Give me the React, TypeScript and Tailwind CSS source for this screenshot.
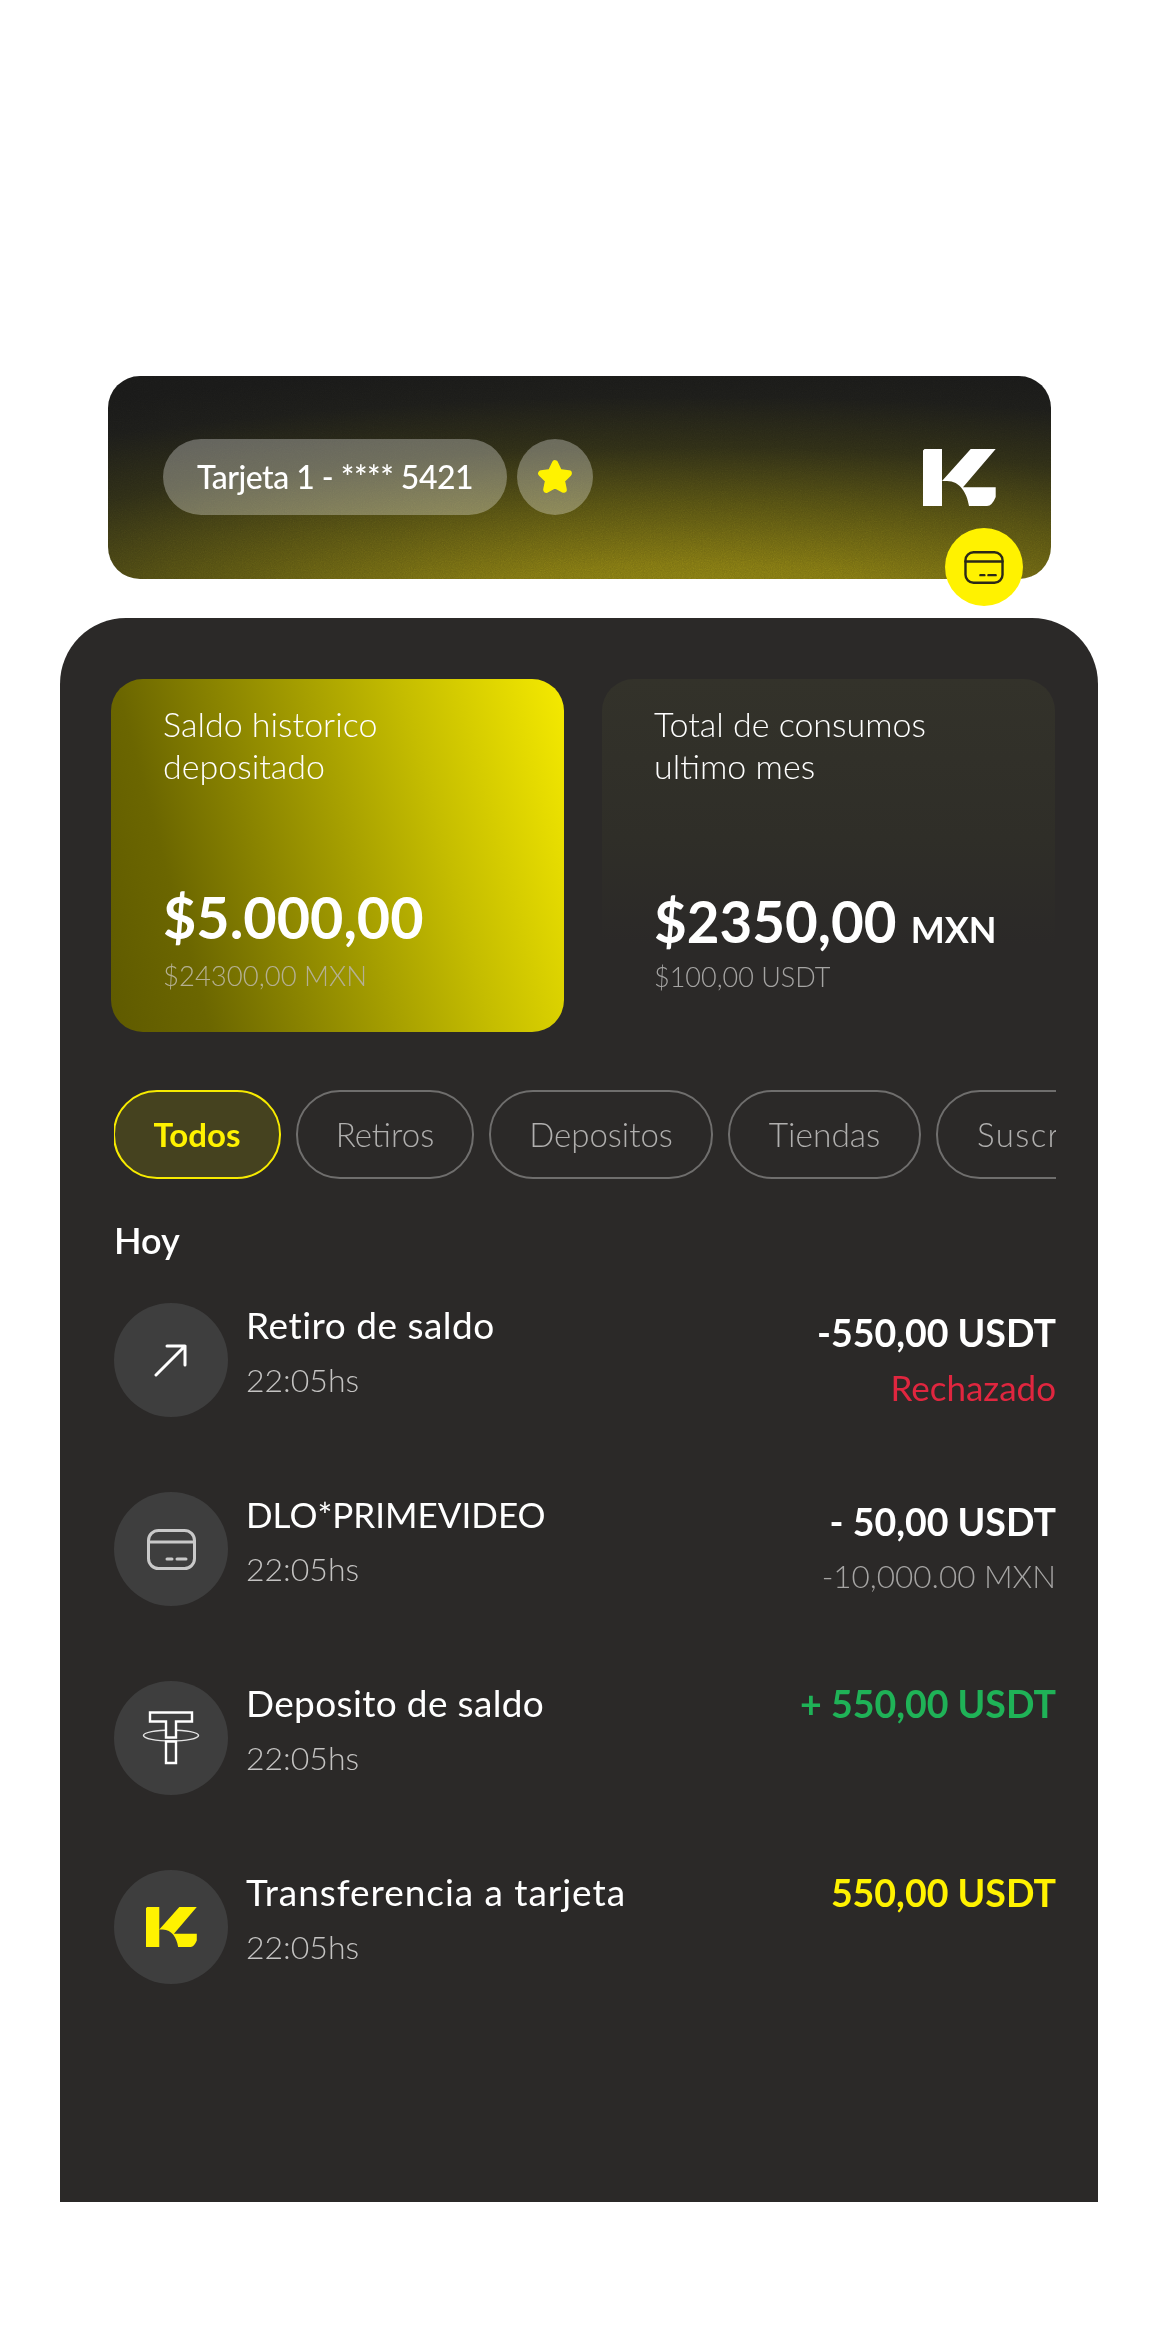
import React from "react";

function KLogo({ className, fill }: { className: string; fill: string }) {
  return (
    <svg viewBox="0 0 73 57" className={className}>
      <path fill={fill} d="M1.5 0H19V32L47.7 0H72.7L40 38.3H72.7V48Q69 57 64 57H46C44 44 37 32 24 32H19V57H0V1.5Z" />
    </svg>
  );
}

function CardIcon({ className, stroke }: { className: string; stroke: string }) {
  return (
    <svg viewBox="0 0 49 41" className={className} fill="none" stroke={stroke} strokeWidth="3" strokeLinecap="round">
      <rect x="1.5" y="1.5" width="46" height="38" rx="10" />
      <path d="M1.5 13H47.5" />
      <path d="M20 30H25M30 30H39" />
    </svg>
  );
}

function TetherIcon() {
  return (
    <svg viewBox="0 0 58 54" className="w-[58px] h-[54px]" fill="none" stroke="#ffffff">
      <ellipse cx="29" cy="24.5" rx="27.5" ry="5.5" strokeWidth="1.5" stroke="#e4e4e4" />
      <path d="M8 1.5H50V10.5H34V26.5H24V10.5H8Z" fill="#3e3e3e" strokeWidth="2.4" />
      <path d="M24 30.5V52H34V30.5Z" fill="#3e3e3e" strokeWidth="2.4" />
    </svg>
  );
}

function ArrowIcon() {
  return (
    <svg viewBox="0 0 34 34" className="w-[34px] h-[34px]" fill="none" stroke="#ffffff" strokeWidth="3" strokeLinecap="round" strokeLinejoin="round">
      <path d="M2 32L31 3M13 3H31V22" />
    </svg>
  );
}

const rows = [
  { icon: <ArrowIcon />, title: "Retiro de saldo", titleClass: "text-[37px] tracking-[0.5px]", amount: "-550,00 USDT", amountClass: "text-white", sub: "Rechazado", subClass: "text-[35px] font-normal text-[#e0263f]", lower: true },
  { icon: <CardIcon className="w-[49px] h-[41px]" stroke="#c9c9c9" />, title: "DLO*PRIMEVIDEO", titleClass: "text-[35px]", amount: "- 50,00 USDT", amountClass: "text-white", sub: "-10,000.00 MXN", subClass: "text-[31.5px] font-light text-[#a5a4a3]", lower: true },
  { icon: <TetherIcon />, title: "Deposito de saldo", titleClass: "text-[37px] tracking-[0.35px]", amount: "+ 550,00 USDT", amountClass: "text-[#1fb257]", sub: "", subClass: "", lower: false },
  { icon: <KLogo className="w-[51px] h-[42px]" fill="#fff200" />, title: "Transferencia a tarjeta", titleClass: "text-[37px] tracking-[0.95px]", amount: "550,00 USDT", amountClass: "text-[#fff200]", sub: "", subClass: "", lower: false },
];

export default function App() {
  return (
    <div className="w-[1160px] h-[2352px] bg-white pt-[376px] font-['Lato',sans-serif] overflow-hidden">
      <div className="relative ml-[108px] w-[943px] h-[203px] rounded-[32px] bg-[radial-gradient(ellipse_125%_125%_at_62%_120%,#8f8414_0%,#7c7212_22%,#555012_45%,#2e2d16_68%,#1c1c19_88%,#191918_100%)] flex items-center justify-between pl-[55px] pr-[55px]">
        <svg className="absolute inset-0 w-full h-full rounded-[32px] opacity-30 mix-blend-overlay pointer-events-none">
          <filter id="grain">
            <feTurbulence type="fractalNoise" baseFrequency="0.9" numOctaves="2" />
            <feColorMatrix type="saturate" values="0" />
          </filter>
          <rect width="100%" height="100%" filter="url(#grain)" />
        </svg>
        <div className="relative flex items-center gap-[10px] -mt-[1px]">
          <div className="h-[76px] w-[344px] rounded-full bg-white/30 flex items-center justify-center text-white text-[32px] tracking-[-0.5px] font-medium">Tarjeta 1 - **** 5421</div>
          <div className="h-[76px] w-[76px] rounded-full bg-white/30 flex items-center justify-center">
            <svg viewBox="0 0 36 36" className="w-[38px] h-[38px]">
              <path fill="#fff200" stroke="#fff200" strokeWidth="6" strokeLinejoin="round" d="M18 5L22 13.5L31 14.6L24.4 21L26.2 30L18 25.6L9.8 30L11.6 21L5 14.6L14 13.5Z" />
            </svg>
          </div>
        </div>
        <KLogo className="relative w-[73px] h-[57px] -mt-[1px]" fill="#ffffff" />
        <div className="absolute left-[837px] top-[152px] w-[78px] h-[78px] rounded-full bg-[#fff200] flex items-center justify-center">
          <CardIcon className="w-[40px] h-[33px]" stroke="#2b2918" />
        </div>
      </div>

      <div className="ml-[60px] mt-[39px] w-[1038px] h-[1584px] rounded-t-[66px] bg-[#2b2928] pt-[61px]">
        <div className="flex gap-[38px] ml-[51px]">
          <div className="w-[453px] h-[353px] rounded-[32px] bg-[linear-gradient(75deg,#5f5a00_0%,#6b6600_18%,#c5bd00_70%,#f5ea00_100%)] pl-[52px] pt-[24px] flex flex-col">
            <div className="text-[34px] leading-[42px] text-white font-light">Saldo historico<br />depositado</div>
            <div className="mt-[98px] text-[57.5px] leading-[64px] font-bold text-white">$5.000,00</div>
            <div className="mt-[11px] text-[27.5px] leading-[32px] font-light text-[#b5b092]">$24300,00 MXN</div>
          </div>
          <div className="w-[453px] h-[353px] rounded-[32px] bg-[linear-gradient(180deg,#33322a_0%,#2f2e28_45%,#2b2928_75%)] pl-[52px] pt-[24px] flex flex-col">
            <div className="text-[34px] leading-[42px] text-white font-light">Total de consumos<br />ultimo mes</div>
            <div className="mt-[102px] text-[56.5px] leading-[64px] font-bold text-white flex items-baseline gap-[14px]">
              <span>$2350,00</span>
              <span className="text-[36px]">MXN</span>
            </div>
            <div className="text-[27px] leading-[32px] font-light text-[#a5a4a3]">$100,00 USDT</div>
          </div>
        </div>

        <div className="mt-[58px] ml-[54px] w-[942px] flex gap-[15px] overflow-hidden">
          <div className="shrink-0 -ml-[1px] w-[168px] h-[89px] rounded-[44px] border-2 border-[#f7eb00] bg-[#45421f] text-[#fff200] text-[33px] font-bold flex items-center justify-center">Todos</div>
          <div className="shrink-0 w-[178px] h-[89px] rounded-[44px] border-2 border-[#6f6e6d] text-[#b0afae] text-[33px] font-light flex items-center justify-center">Retiros</div>
          <div className="shrink-0 w-[224px] h-[89px] rounded-[44px] border-2 border-[#6f6e6d] text-[#b0afae] text-[33px] font-light flex items-center justify-center">Depositos</div>
          <div className="shrink-0 w-[193px] h-[89px] rounded-[44px] border-2 border-[#6f6e6d] text-[#b0afae] text-[33.5px] font-light flex items-center justify-center">Tiendas</div>
          <div className="shrink-0 w-[260px] h-[89px] rounded-[44px] border-2 border-[#6f6e6d] text-[#b0afae] text-[33px] tracking-[1.4px] font-light flex items-center pl-[39px]">Suscripciones</div>
        </div>

        <div className="mt-[39px] pl-[54px] text-[36px] leading-[44px] font-semibold text-white">Hoy</div>

        <div className="mt-[41px] ml-[54px] w-[942px] flex flex-col gap-[75px]">
          {rows.map((r) => (
            <div key={r.title} className="h-[114px] flex">
              <div className="w-[114px] h-[114px] rounded-full bg-[#3e3e3e] flex items-center justify-center shrink-0">{r.icon}</div>
              <div className="ml-[18px] flex-1">
                <div className={`leading-[44px] text-white ${r.titleClass}`}>{r.title}</div>
                <div className="mt-[13px] text-[32px] leading-[40px] font-light text-[#c4c3c2]">22:05hs</div>
              </div>
              <div className={`text-right ${r.lower ? "pt-[8px]" : "pt-[1px]"}`}>
                <div className={`text-[37.5px] leading-[44px] font-bold ${r.amountClass}`}>{r.amount}</div>
                {r.sub && <div className={`mt-[12px] leading-[40px] ${r.subClass}`}>{r.sub}</div>}
              </div>
            </div>
          ))}
        </div>
      </div>
    </div>
  );
}
